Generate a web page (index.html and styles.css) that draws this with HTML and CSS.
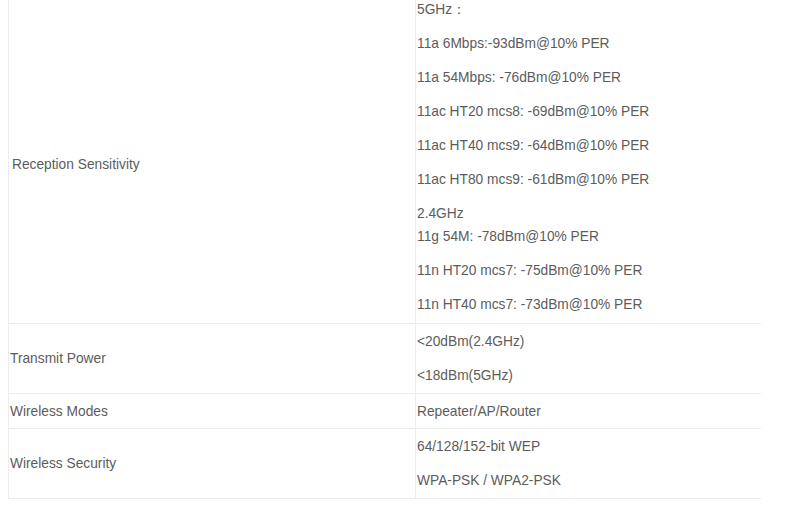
FILE: index.html
```html
<!DOCTYPE html>
<html lang="en">
<head>
  <meta charset="UTF-8" />
  <meta name="viewport" content="width=device-width, initial-scale=1.0" />
  <title>Specifications</title>
  <link rel="stylesheet" href="styles.css">
</head>
<body>

  <table class="spec-table">
    <colgroup>
      <col class="col-label">
      <col class="col-value">
    </colgroup>
    <tr class="first-row">
      <td class="label label-main">Reception Sensitivity</td>
      <td class="value">
        <p>5GHz：</p>
        <p>11a 6Mbps:-93dBm@10% PER</p>
        <p>11a 54Mbps: -76dBm@10% PER</p>
        <p>11ac HT20 mcs8: -69dBm@10% PER</p>
        <p>11ac HT40 mcs9: -64dBm@10% PER</p>
        <p>11ac HT80 mcs9: -61dBm@10% PER</p>
        <p class="band">2.4GHz</p>
        <p>11g 54M: -78dBm@10% PER</p>
        <p>11n HT20 mcs7: -75dBm@10% PER</p>
        <p>11n HT40 mcs7: -73dBm@10% PER</p>
      </td>
    </tr>
    <tr>
      <td class="label">Transmit Power</td>
      <td class="value">
        <p>&lt;20dBm(2.4GHz)</p>
        <p>&lt;18dBm(5GHz)</p>
      </td>
    </tr>
    <tr class="single-row">
      <td class="label">Wireless Modes</td>
      <td class="value">
        <p>Repeater/AP/Router</p>
      </td>
    </tr>
    <tr>
      <td class="label">Wireless Security</td>
      <td class="value">
        <p>64/128/152-bit WEP</p>
        <p>WPA-PSK / WPA2-PSK</p>
      </td>
    </tr>
  </table>

</body>
</html>
```

FILE: styles.css
```css
body {
  font-family: Arial, 'Liberation Sans', sans-serif;
  font-size: 13.75px;
  color: #5c5c5c;
  background-color: #fff;
  margin: 0;
}

.spec-table {
  border-collapse: collapse;
  margin-left: 8px;
  width: 752px;
  table-layout: fixed;
}

.col-label {
  width: 407px;
}

.col-value {
  width: 345px;
}

.spec-table td {
  border: 1px solid #ececf0;
  vertical-align: middle;
}

.spec-table td.value {
  border-right: none;
}

.first-row td {
  border-top: none;
}

.label {
  padding: 0 1px;
}

.label-main {
  padding: 6px 3px 0;
}

.value {
  padding: 8px 1px 7px;
}

.first-row .value {
  padding-top: 0;
  padding-bottom: 8px;
}

.single-row .value {
  padding-bottom: 6px;
}

.value p {
  margin: 0 0 14px;
  line-height: 20px;
}

.value p:last-child {
  margin-bottom: 0;
}

.value .band {
  margin-bottom: 3px;
}
```
